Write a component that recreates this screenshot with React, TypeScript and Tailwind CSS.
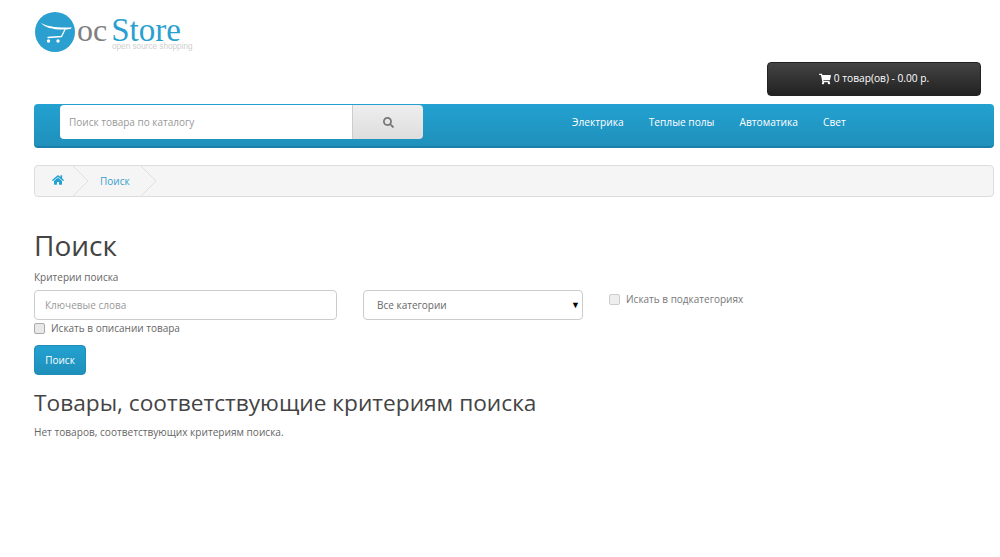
import React from "react";
import { FaHome, FaSearch, FaShoppingCart } from "react-icons/fa";

const font = { fontFamily: '"Open Sans", sans-serif' };

function Logo() {
	return (
		<div className="flex h-[40px] w-[160px] items-start pl-[1px]">
			<svg width="40" height="40" viewBox="0 0 40 40" className="shrink-0">
				<circle cx="20" cy="20" r="20" fill="#2a9fd0" />
				<path d="M5.5 10.5C11 14.5 22 16 37 15.5l-1.5 1.5C23 18.5 11 17 5.5 10.5z" fill="#fff" />
				<path d="M30 17.5L26.5 24.5 13 25.5" fill="none" stroke="#fff" strokeWidth="1.3" strokeLinecap="round" strokeLinejoin="round" />
				<circle cx="13.5" cy="29" r="1.7" fill="#fff" />
				<circle cx="23" cy="29" r="1.7" fill="#fff" />
			</svg>
			<div className="relative ml-[2px] mt-[6px] flex items-baseline font-['Liberation_Serif',serif] leading-[24px]">
				<span className="text-[32px] text-[#808080]">oc</span>
				<span className="ml-[4px] text-[33px] text-[#2a9fd0]">Store</span>
				<span className="absolute left-[35px] top-[25px] whitespace-nowrap font-['Liberation_Sans',sans-serif] text-[8.2px] leading-[8px] text-[#cfcfcf]">
					open source shopping
				</span>
			</div>
		</div>
	);
}

function Crumb({ children, className }: { children: React.ReactNode; className: string }) {
	return (
		<li className={`relative flex h-full items-center ${className}`}>
			{children}
			<svg width="15" height="30" viewBox="0 0 15 30" className="absolute -right-[15px] top-0">
				<path d="M0 0l15 15L0 30" fill="#f5f5f5" stroke="#e0e0e0" />
			</svg>
		</li>
	);
}

export default function App() {
	return (
		<div className="h-[557px] w-[1000px] overflow-hidden bg-white pl-[34px] pr-[6px] pt-[12px] text-[#666]" style={font}>
			<Logo />

			<div className="mt-[10px] flex justify-end pr-[13px]">
				<button className="flex h-[34px] w-[214px] items-center justify-center gap-[3px] rounded-[4px] border border-[#222] bg-gradient-to-b from-[#444] to-[#222] text-[10.2px] text-white">
					<FaShoppingCart className="text-[12px]" />
					0 товар(ов) - 0.00 р.
				</button>
			</div>

			<nav className="mt-[8px] flex h-[44px] items-start rounded-[4px] border-b-2 border-[#1b7fa8] bg-gradient-to-b from-[#23a1d1] to-[#1f90bb] pl-[26px]">
				<div className="mt-[1px] flex h-[34px] w-[363px] overflow-hidden rounded-[4px]">
					<div className="flex w-[292px] items-center bg-white pl-[9px] text-[10px] text-[#999]">Поиск товара по каталогу</div>
					<div className="flex flex-1 items-center justify-center border-l border-[#ccc] bg-gradient-to-b from-[#eee] to-[#ddd] text-[11px] text-[#777]">
						<FaSearch />
					</div>
				</div>
				<ul className="ml-[149px] mt-[11px] flex gap-[25px] text-[10.2px] leading-[14px] text-white">
					<li>Электрика</li>
					<li>Теплые полы</li>
					<li>Автоматика</li>
					<li>Свет</li>
				</ul>
			</nav>

			<ul className="mt-[17px] flex h-[32px] items-center rounded-[4px] border border-[#ddd] bg-[#f5f5f5] text-[10px] text-[#3a9fd0]">
				<Crumb className="pl-[17px] pr-[9px]">
					<FaHome className="-mt-[2px] text-[12px] text-[#23a1d1]" />
				</Crumb>
				<Crumb className="pl-[27px] pr-[11px]">Поиск</Crumb>
			</ul>

			<h1 className="mt-[29px] text-[28px] leading-[38px] text-[#444]">Поиск</h1>
			<label className="mt-[6px] block text-[10px] leading-[14px] text-[#666]">Критерии поиска</label>

			<div className="mt-[6px] flex items-start">
				<div className="w-[303px]">
					<div className="flex h-[30px] items-center rounded-[4px] border border-[#ccc] pl-[10px] text-[10px] text-[#999]">Ключевые слова</div>
					<label className="mt-[3px] flex items-center gap-[6px] text-[10px] leading-[11px]">
						<span className="h-[11px] w-[11px] rounded-[2px] border border-[#aaa] bg-[#e8e8e8]" />
						Искать в описании товара
					</label>
				</div>
				<div className="ml-[26px] flex h-[30px] w-[220px] items-center justify-between rounded-[4px] border border-[#ccc] pl-[13px] pr-[2px] text-[10px] text-[#666]">
					Все категории
					<span className="text-[9px] text-black">▼</span>
				</div>
				<label className="ml-[26px] mt-[4px] flex items-center gap-[6px] text-[10px] leading-[11px] text-[#777]">
					<span className="h-[11px] w-[11px] rounded-[2px] border border-[#ccc] bg-[#eee]" />
					Искать в подкатегориях
				</label>
			</div>

			<button className="mt-[11px] block h-[30px] w-[52px] rounded-[4px] border border-[#1f8fb9] bg-gradient-to-b from-[#23a1d1] to-[#1f90bb] text-[10px] text-white">
				Поиск
			</button>

			<h2 className="mt-[10px] text-[22.7px] leading-[36px] text-[#444]">Товары, соответствующие критериям поиска</h2>
			<p className="mt-[4px] text-[10.1px] leading-[14px] text-[#666]">Нет товаров, соответствующих критериям поиска.</p>
		</div>
	);
}
